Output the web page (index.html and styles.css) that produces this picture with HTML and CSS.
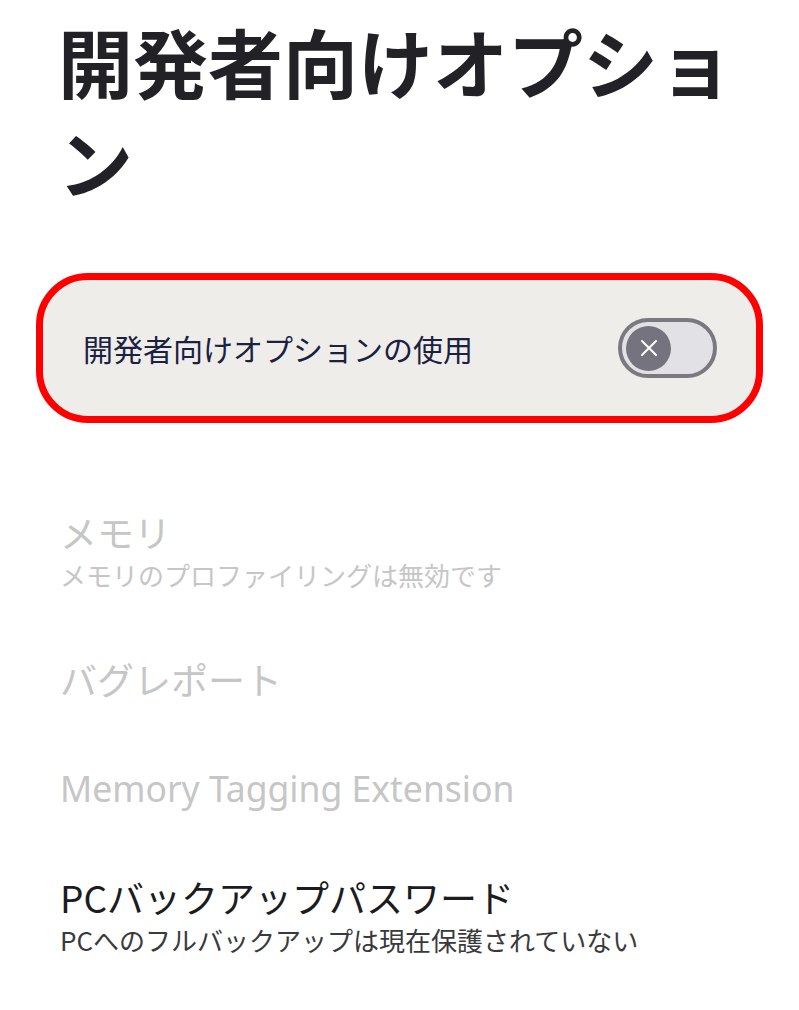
FILE: index.html
```html
<!DOCTYPE html>
<html lang="ja">
<head>
    <meta charset="UTF-8">
    <meta name="viewport" content="width=device-width, initial-scale=1.0">
    <title>開発者向けオプション</title>
    <link rel="stylesheet" href="styles.css">
</head>
<body>
    <div class="page">
        <h1 class="title">開発者向けオプション</h1>

        <div class="master-card">
            <span class="master-label">開発者向けオプションの使用</span>
            <div class="switch">
                <div class="switch-thumb">
                    <svg width="20" height="20" viewBox="0 0 20 20">
                        <path d="M3 3 L17 17 M17 3 L3 17" stroke="#ffffff" stroke-width="2" stroke-linecap="round"/>
                    </svg>
                </div>
            </div>
        </div>

        <ul class="options">
            <li class="option disabled">
                <div class="option-title">メモリ</div>
                <div class="option-summary">メモリのプロファイリングは無効です</div>
            </li>
            <li class="option disabled">
                <div class="option-title">バグレポート</div>
            </li>
            <li class="option disabled">
                <div class="option-title latin">Memory Tagging Extension</div>
            </li>
            <li class="option">
                <div class="option-title">PCバックアップパスワード</div>
                <div class="option-summary">PCへのフルバックアップは現在保護されていない</div>
            </li>
        </ul>
    </div>
</body>
</html>
```

FILE: styles.css
```css
body {
    margin: 0;
    padding: 0;
    background-color: #ffffff;
    font-family: "Noto Sans CJK JP", "Noto Sans", sans-serif;
    color: #1c1c1e;
}
.page {
    padding: 11px 36px 0 36px;
}
.title {
    margin: 0 0 62px 0;
    padding: 0 0 0 22px;
    font-size: 75px;
    line-height: 100px;
    font-weight: 700;
    color: #222226;
}
.master-card {
    display: flex;
    align-items: center;
    justify-content: space-between;
    height: 136px;
    padding: 0 39px 0 40px;
    background-color: #efedea;
    border: 7px solid #ff0000;
    border-radius: 52px;
}
.master-label {
    font-size: 30px;
    color: #1b2140;
}
.switch {
    width: 87px;
    height: 52px;
    padding-left: 4px;
    border: 4px solid #7a7980;
    border-radius: 30px;
    background-color: #e2e1e6;
    display: flex;
    align-items: center;
}
.switch-thumb {
    width: 45px;
    height: 45px;
    border-radius: 50%;
    background-color: #75747e;
    display: flex;
    align-items: center;
    justify-content: center;
}
.options {
    list-style: none;
    margin: 0;
    padding: 86px 0 0 24px;
}
.option {
    margin-bottom: 63px;
}
.option-title {
    font-size: 37px;
    line-height: 46px;
    color: #1c1c1e;
}
.option-title.latin {
    font-family: "Noto Sans", sans-serif;
    font-size: 35.5px;
}
.option-summary {
    margin-top: 2px;
    font-size: 26px;
    line-height: 36px;
    color: #3a3a3c;
}
.option.disabled .option-title,
.option.disabled .option-summary {
    color: #c6c6c6;
}
```
